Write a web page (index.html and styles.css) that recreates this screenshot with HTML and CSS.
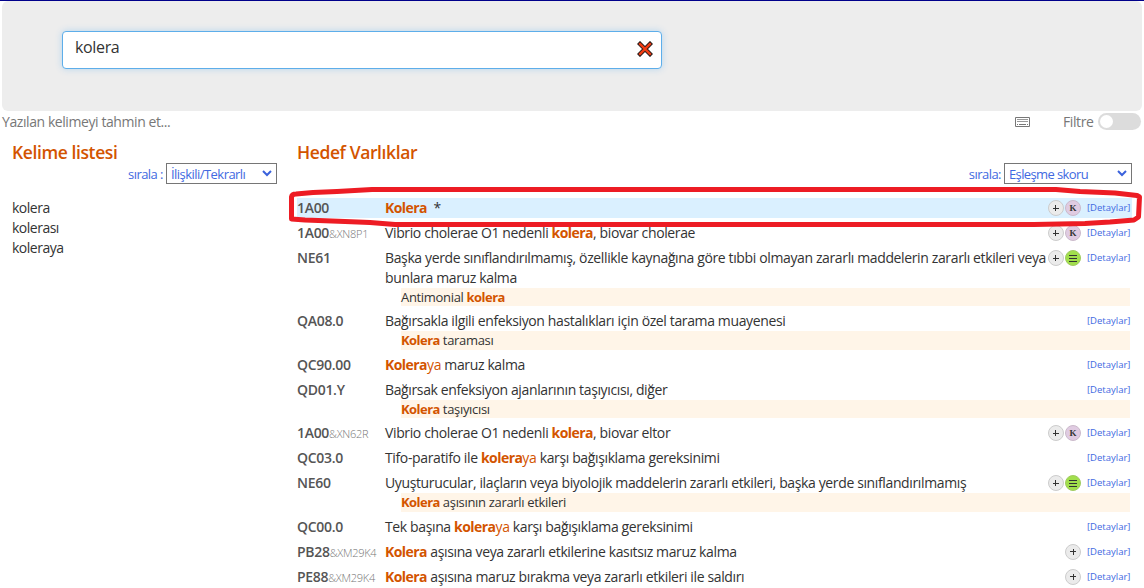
FILE: index.html
```
<!DOCTYPE html>
<html lang="tr">
<head>
<meta charset="utf-8">
<title>Kolera</title>
<link rel="stylesheet" href="styles.css">
</head>
<body>
<header class="search-panel">
  <div class="search-box"><span class="query">kolera</span>
    <svg class="clear" width="16" height="16" viewBox="0 0 16 16"><path d="M3 3L13 13M13 3L3 13" stroke="#35201c" stroke-width="4.4" stroke-linecap="square"/><path d="M3 3L13 13M13 3L3 13" stroke="#f53d13" stroke-width="2.4" stroke-linecap="round"/></svg>
  </div>
</header>
<div class="toolbar">
  <span class="guess">Yazılan kelimeyi tahmin et...</span>
  <svg class="keyboard" width="15" height="10" viewBox="0 0 15 10"><path d="M.5.5h14v9H.5z" fill="#fff" stroke="#777"/><path d="M2 2.5h11M2 4.5h11" stroke="#999"/><path d="M2 7.5h1M4 7.5h7M12 7.5h1" stroke="#777"/></svg>
  <span class="filter">Filtre</span><span class="toggle"></span>
</div>
<main class="columns">
  <section class="words">
    <h2>Kelime listesi</h2>
    <div class="sort"><span>sırala :</span><span class="select select-words"><span class="val-words">İlişkili/Tekrarlı</span><svg width="10" height="7" viewBox="0 0 10 7"><path d="M1 1l4 4 4-4" fill="none" stroke="#3b62dc" stroke-width="2"/></svg></span></div>
    <ul class="word-list"><li>kolera</li><li>kolerası</li><li>koleraya</li></ul>
  </section>
  <section class="entities">
    <h2>Hedef Varlıklar</h2>
    <div class="sort"><span class="sort-label">sırala:</span><span class="select select-score"><span class="val-score">Eşleşme skoru</span><svg width="10" height="7" viewBox="0 0 10 7"><path d="M1 1l4 4 4-4" fill="none" stroke="#3b62dc" stroke-width="2"/></svg></span></div>
    <div class="results">
      <div class="row selected"><div class="code">1A00</div><div class="title"><b>Kolera</b> &nbsp;*</div><div class="tools"><i class="plus"></i><i class="k">K</i><a>[Detaylar]</a></div></div>
      <div class="row"><div class="code">1A00<small>&amp;XN8P1</small></div><div class="title">Vibrio cholerae O1 nedenli <b>kolera</b>, biovar cholerae</div><div class="tools"><i class="plus"></i><i class="k">K</i><a>[Detaylar]</a></div></div>
      <div class="row"><div class="code">NE61</div><div class="title">Başka yerde sınıflandırılmamış, özellikle kaynağına göre tıbbi olmayan zararlı maddelerin zararlı etkileri veya<br>bunlara maruz kalma</div><div class="tools"><i class="plus"></i><i class="list"></i><a>[Detaylar]</a></div><div class="sub">Antimonial <b>kolera</b></div></div>
      <div class="row"><div class="code">QA08.0</div><div class="title">Bağırsakla ilgili enfeksiyon hastalıkları için özel tarama muayenesi</div><div class="tools"><a>[Detaylar]</a></div><div class="sub"><b>Kolera</b> taraması</div></div>
      <div class="row"><div class="code">QC90.00</div><div class="title"><b>Kolera</b><em>ya</em> maruz kalma</div><div class="tools"><a>[Detaylar]</a></div></div>
      <div class="row"><div class="code">QD01.Y</div><div class="title">Bağırsak enfeksiyon ajanlarının taşıyıcısı, diğer</div><div class="tools"><a>[Detaylar]</a></div><div class="sub"><b>Kolera</b> taşıyıcısı</div></div>
      <div class="row"><div class="code">1A00<small>&amp;XN62R</small></div><div class="title">Vibrio cholerae O1 nedenli <b>kolera</b>, biovar eltor</div><div class="tools"><i class="plus"></i><i class="k">K</i><a>[Detaylar]</a></div></div>
      <div class="row"><div class="code">QC03.0</div><div class="title">Tifo-paratifo ile <b>kolera</b><em>ya</em> karşı bağışıklama gereksinimi</div><div class="tools"><a>[Detaylar]</a></div></div>
      <div class="row"><div class="code">NE60</div><div class="title">Uyuşturucular, ilaçların veya biyolojik maddelerin zararlı etkileri, başka yerde sınıflandırılmamış</div><div class="tools"><i class="plus"></i><i class="list"></i><a>[Detaylar]</a></div><div class="sub"><b>Kolera</b> aşısının zararlı etkileri</div></div>
      <div class="row"><div class="code">QC00.0</div><div class="title">Tek başına <b>kolera</b><em>ya</em> karşı bağışıklama gereksinimi</div><div class="tools"><a>[Detaylar]</a></div></div>
      <div class="row"><div class="code">PB28<small>&amp;XM29K4</small></div><div class="title"><b>Kolera</b> aşısına veya zararlı etkilerine kasıtsız maruz kalma</div><div class="tools"><i class="plus"></i><a>[Detaylar]</a></div></div>
      <div class="row"><div class="code">PE88<small>&amp;XM29K4</small></div><div class="title"><b>Kolera</b> aşısına maruz bırakma veya zararlı etkileri ile saldırı</div><div class="tools"><i class="plus"></i><a>[Detaylar]</a></div></div>
    </div>
  </section>
</main>
<svg class="marker" width="860" height="44" viewBox="284 184 860 44"><path d="M291.5 219V197Q292 194 296 194L313 192.500L337 191.500L372 189.500H1056L1080 191.500L1115 193L1137 195.500L1139.500 197L1138.500 217L1134 220L1110 222L1085 223.500L1034 224.500H395L370 222.500L345 221.500L305 220Z" fill="none" stroke="#ed1c24" stroke-width="5" stroke-linejoin="round"/></svg>
</body>
</html>
```
FILE: styles.css
```
* { box-sizing: border-box; }
body {
  margin: 0; height: 588px; overflow: hidden; position: relative;
  border-top: 1px solid #00008b; background: #fff; color: #333;
  font: 14px/20px "Open Sans", "Noto Sans", sans-serif;
}
.search-panel { height: 110px; margin: 0 2px; padding: 30px 60px; background: #ededed; border-radius: 6px; }
.search-box {
  display: flex; justify-content: space-between; width: 600px; height: 38px; padding: 0 8px 0 12px;
  background: #fff; border: 1px solid #5daeea; border-radius: 4px; box-shadow: 0 0 7px #b5d5ee;
}
.query { font-size: 16px; line-height: 31px; letter-spacing: -.35px; }
.clear { margin-top: 9px; }
.toolbar { display: flex; align-items: center; height: 21px; padding: 0 3px 0 2px; color: #777; }
.guess { letter-spacing: -.42px; }
.keyboard { margin: 1px 33px 0 auto; }
.filter { width: 35px; letter-spacing: -.4px; }
.toggle { width: 43px; height: 17px; border-radius: 9px; background: #dcdcdc; display: flex; padding: 2px; }
.toggle::before { content: ""; width: 13px; height: 13px; border-radius: 50%; background: #fff; }
.columns { display: flex; }
.words { width: 289px; padding: 10px 12px; }
.entities { flex: 1; padding: 10px 12px 0 8px; }
h2 { margin: 0 0 1px; height: 20px; font-size: 17.500px; line-height: 21px; font-weight: 600; color: #d35400; letter-spacing: -.4px; white-space: nowrap; }
.sort { display: flex; justify-content: flex-end; align-items: center; gap: 3px; height: 21px; font-size: 13px; color: #4169e1; letter-spacing: -.54px; white-space: nowrap; }
.select { display: flex; align-items: center; justify-content: space-between; height: 21px; padding: 0 4px; border: 1px solid #767676; color: #4169e1; }
.select-words { width: 111px; }
.select-score { width: 128px; }
.val-score { letter-spacing: -.62px; }
.word-list { margin: 14px 0 0; padding: 0; list-style: none; letter-spacing: -.5px; }
.results { padding-top: 14px; }
.row { display: grid; grid-template-columns: 88px 1fr auto; margin-bottom: 5px; white-space: nowrap; padding-right: 2px; }
.code { height: 20px; font-weight: 600; color: #555; letter-spacing: -.3px; }
.selected { background: #daf0ff; }
small { font-size: 11px; line-height: 1; font-weight: 300; letter-spacing: -.25px; color: #777; }
.title { width: 0; letter-spacing: -.37px; }
b { font-weight: 700; color: #d35400; letter-spacing: -.55px; }
em { font-style: normal; color: #d35400; }
.sub { grid-column: 2 / -1; margin-left: 16px; height: 18.400px; line-height: 18.400px; font-size: 13px; letter-spacing: -.32px; background: #fff5e8; }
.tools { display: flex; align-items: flex-start; height: 20px; }
.tools a { font-size: 9.500px; line-height: 20px; color: #4169e1; letter-spacing: 0; width: 43px; margin-left: 6px; }
.tools i { width: 16px; height: 16px; margin: 2px 0 0 1.500px; border: 1px solid #ccc; border-radius: 50%; background: #ebebeb; text-align: center; font: 700 9px/14px "Liberation Serif", serif; }
.tools .plus { background: linear-gradient(#333, #333) center / 6px 1px no-repeat, linear-gradient(#333, #333) center / 1px 6px no-repeat, #ebebeb; }
.tools .k { background: #e0cbe2; border-color: #cbbacb; }
.tools .list { background: linear-gradient(#333 1px, transparent 1px 3px, #333 3px 4px, transparent 4px 6px, #333 6px) center / 8px 7px no-repeat, #a1df4c; border-color: #a1cb62; }
.marker { position: absolute; left: 284px; top: 183px; }
```
